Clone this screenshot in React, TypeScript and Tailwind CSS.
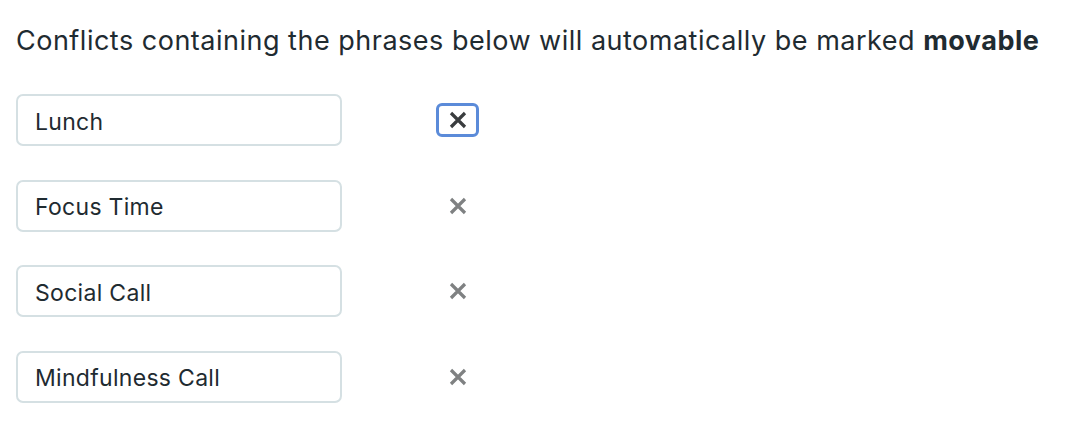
import { useState } from "react";

const phrases = ["Lunch", "Focus Time", "Social Call", "Mindfulness Call"];

function XIcon({ className }: { className?: string }) {
  return (
    <svg viewBox="0 0 20 20" className={className} fill="none">
      <path d="M3 3L17 17M17 3L3 17" stroke="currentColor" strokeWidth="3.2" />
    </svg>
  );
}

export default function App() {
  const [items, setItems] = useState(phrases);

  return (
    <div className="min-h-[430px] bg-white px-4 pt-[23px] font-['Inter',sans-serif] text-[#1f2b31]">
      <p className="text-[27px] leading-[36px] tracking-[0.5px]">
        Conflicts containing the phrases below will automatically be marked{" "}
        <strong className="font-bold">movable</strong>
      </p>

      <div className="mt-[35px] flex flex-col gap-[33.5px]">
        {items.map((item, index) => (
          <div key={item} className="flex items-center">
            <input
              defaultValue={item}
              className="h-[52px] w-[326px] rounded-[7px] border-2 border-[#d5e0e3] bg-white px-[17px] pt-[3px] text-[23px] tracking-[0.3px] text-[#1f2b31] outline-none"
            />
            <button
              type="button"
              onClick={() => setItems(items.filter((i) => i !== item))}
              className={
                index === 0
                  ? "ml-[94px] flex h-[34px] w-[43px] items-center justify-center rounded-[6px] border-[3px] border-[#5b8bd9] text-[#3a3d3f]"
                  : "ml-[94px] flex h-[34px] w-[43px] items-center justify-center rounded-[6px] border-[3px] border-transparent text-[#7f8182]"
              }
            >
              <XIcon className="size-[20px]" />
            </button>
          </div>
        ))}
      </div>
    </div>
  );
}
